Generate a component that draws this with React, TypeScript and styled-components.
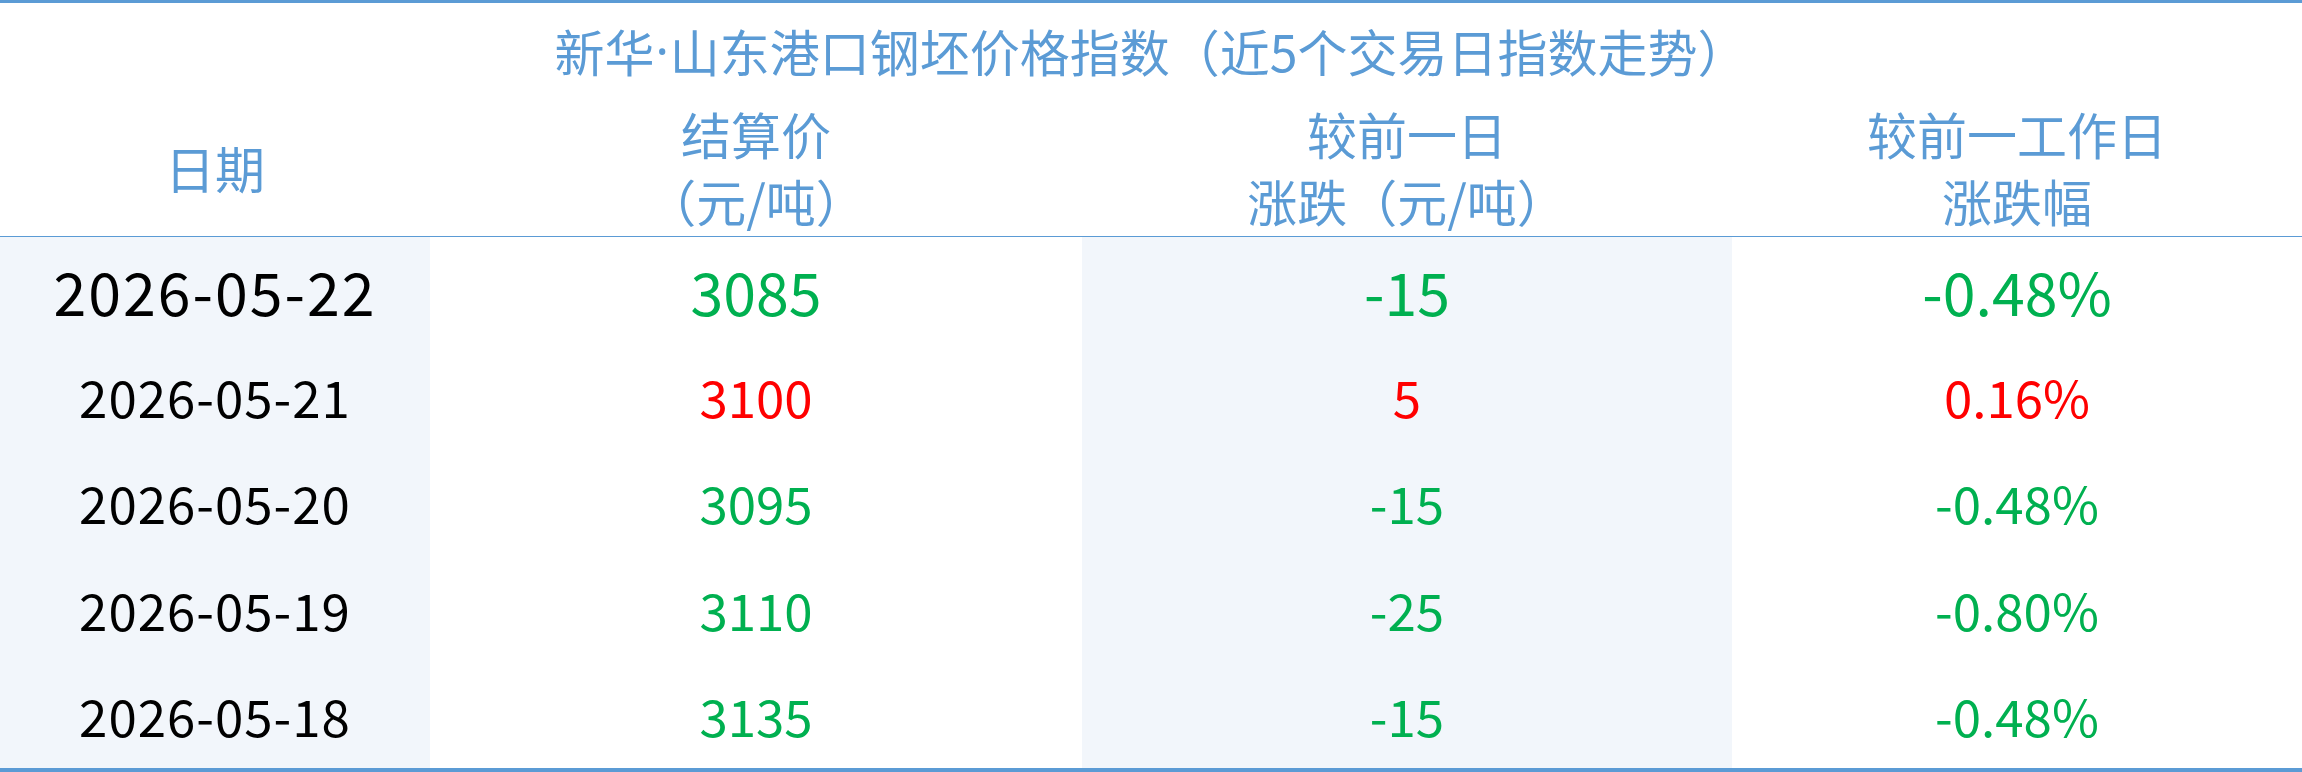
import React from "react";
import styled, { createGlobalStyle } from "styled-components";

const GlobalStyle = createGlobalStyle`
  html, body {
    margin: 0;
    padding: 0;
    background: #ffffff;
  }
  body {
    font-family: "Noto Sans CJK SC", "Noto Sans", sans-serif;
  }
`;

type Trend = "up" | "down";

interface Row {
  date: string;
  price: string;
  change: string;
  pct: string;
  trend: Trend;
}

const rows: Row[] = [
  { date: "2026-05-22", price: "3085", change: "-15", pct: "-0.48%", trend: "down" },
  { date: "2026-05-21", price: "3100", change: "5", pct: "0.16%", trend: "up" },
  { date: "2026-05-20", price: "3095", change: "-15", pct: "-0.48%", trend: "down" },
  { date: "2026-05-19", price: "3110", change: "-25", pct: "-0.80%", trend: "down" },
  { date: "2026-05-18", price: "3135", change: "-15", pct: "-0.48%", trend: "down" },
];

const App: React.FC = () => {
  return (
    <>
      <GlobalStyle />
      <Table>
        <Title>
          新华<Dot>·</Dot>山东港口钢坯价格指数（近5个交易日指数走势）
        </Title>
        <Head>
          <HeadCell>日期</HeadCell>
          <HeadCell>
            <span>结算价</span>
            <span>（元/吨）</span>
          </HeadCell>
          <HeadCell>
            <span>较前一日</span>
            <span>涨跌（元/吨）</span>
          </HeadCell>
          <HeadCell>
            <span>较前一工作日</span>
            <span>涨跌幅</span>
          </HeadCell>
        </Head>
        <Body>
          {rows.map((r, i) => (
            <DataRow key={r.date}>
              <DateCell shaded big={i === 0}>
                {r.date}
              </DateCell>
              <Cell trend={r.trend} big={i === 0}>
                {r.price}
              </Cell>
              <Cell shaded trend={r.trend} big={i === 0}>
                {r.change}
              </Cell>
              <Cell trend={r.trend} big={i === 0}>
                {r.pct}
              </Cell>
            </DataRow>
          ))}
        </Body>
      </Table>
    </>
  );
};

export default App;

const columns = "430px 652px 650px 1fr";

const Table = styled.div`
  width: 2302px;
  height: 772px;
  box-sizing: border-box;
  border-top: 3px solid #5b9bd5;
  border-bottom: 4px solid #5b9bd5;
  display: flex;
  flex-direction: column;
`;

const Title = styled.div`
  height: 93px;
  display: flex;
  align-items: center;
  justify-content: center;
  font-size: 50px;
  color: #5b9bd5;
  white-space: nowrap;
`;

const Dot = styled.span`
  font-family: "Noto Sans", sans-serif;
  padding: 0 1px;
`;

const Head = styled.div`
  display: grid;
  grid-template-columns: ${columns};
  height: 140px;
  border-bottom: 1px solid #5b9bd5;
`;

const HeadCell = styled.div`
  display: flex;
  flex-direction: column;
  align-items: center;
  justify-content: center;
  font-size: 50px;
  line-height: 67px;
  color: #5b9bd5;
  white-space: nowrap;
  padding-top: 2px;
`;

const Body = styled.div`
  flex: 1;
  display: grid;
  grid-template-rows: repeat(5, 1fr);
`;

const DataRow = styled.div`
  display: grid;
  grid-template-columns: ${columns};
`;

const Cell = styled.div<{ shaded?: boolean; trend?: Trend; big?: boolean }>`
  display: flex;
  align-items: center;
  justify-content: center;
  background: ${(p) => (p.shaded ? "#f2f6fb" : "#ffffff")};
  color: ${(p) =>
    p.trend === "up" ? "#ff0000" : p.trend === "down" ? "#00b050" : "#000000"};
  font-size: ${(p) => (p.big ? "59px" : "51px")};
  white-space: nowrap;
`;

const DateCell = styled(Cell)`
  letter-spacing: ${(p) => (p.big ? "2px" : "1px")};
`;
